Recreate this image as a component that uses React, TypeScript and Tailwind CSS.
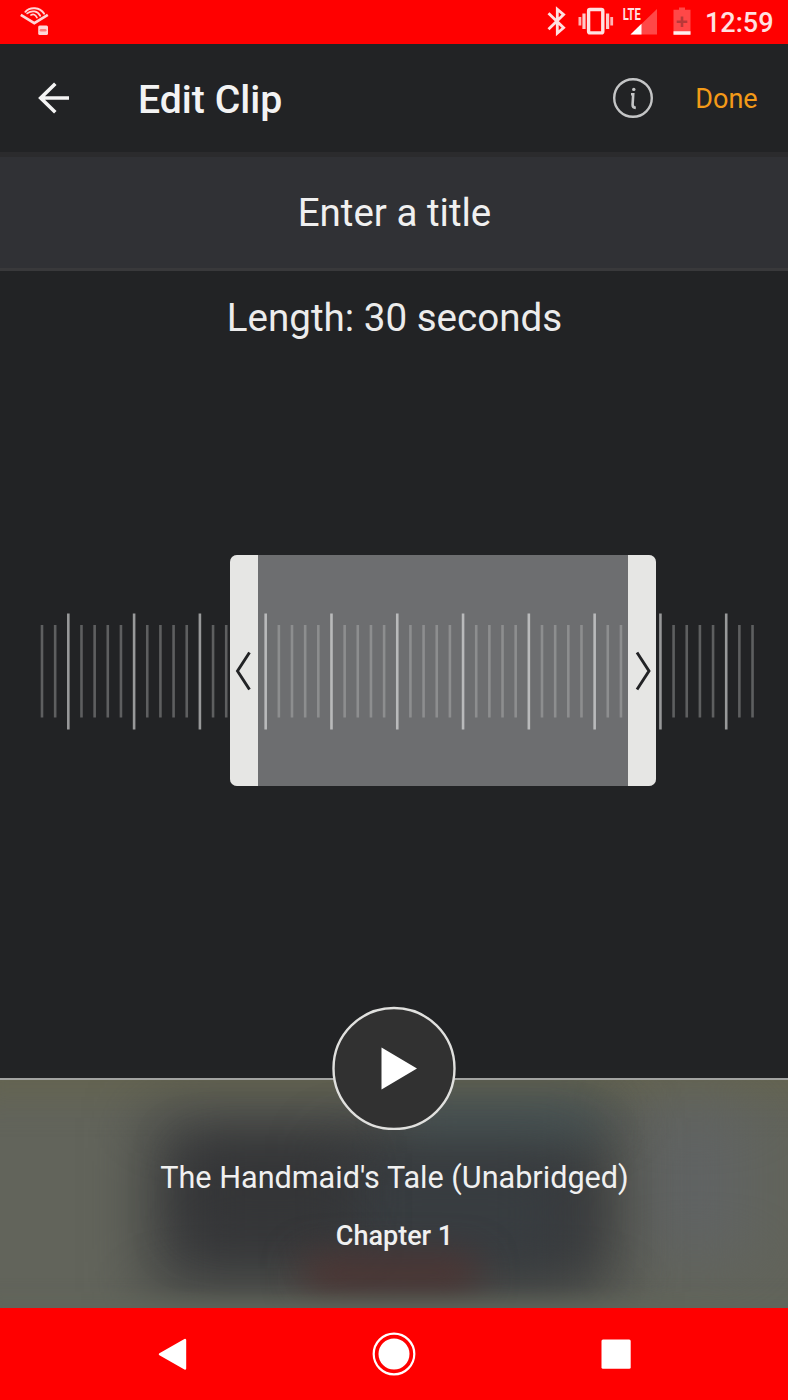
const TICKS = Array.from({ length: 55 }, (_, i) => ({
  x: 42 + i * 13.158,
  major: i % 5 === 2,
}));

function StatusBar() {
  return (
    <div className="flex h-11 shrink-0 items-start justify-between bg-[#ff0000]">
      <svg className="h-11 w-[60px]" viewBox="0 0 60 44" fill="none" stroke="#ffd6d6" strokeLinecap="round">
        <path d="M20.8 14.8 34.3 23.2 47.8 14.8" strokeWidth="2.6" strokeLinecap="butt" />
        <path d="M25.4 11.8C30 6.4 40 7 44 13.6" strokeWidth="2" />
        <path d="M27.2 13.4C32 9.8 37.6 11 40.2 15.8" strokeWidth="1.8" />
        <path d="M31 15C33.6 13.6 35.6 14.8 37 17.6" strokeWidth="1.7" />
        <rect x="38.2" y="25.5" width="9.8" height="9.5" rx="1.5" fill="#ffd6d6" stroke="none" />
        <path d="M41 30.3h4.2" stroke="#ff7c7c" strokeWidth="2.6" />
      </svg>
      <div className="flex h-11 items-start">
        <svg className="h-11 w-[156px]" viewBox="545 0 156 44" fill="none">
          <path d="M548.5 13.2 563.6 27.8 557.3 33.2V9.3L563.6 14.6 548.5 29.3" stroke="#ffe1e1" strokeWidth="2.8" />
          <rect x="588.6" y="9.5" width="14.2" height="23.4" rx="1.4" stroke="#ffe1e1" strokeWidth="3.4" />
          <path d="M584 13.5v15.5M607.6 13.5v15.5" stroke="#ffc9c9" strokeWidth="3.2" />
          <path d="M579.9 17v8.5M611.7 17v8.5" stroke="#ffb4b4" strokeWidth="2.8" />
          <path d="M657 9V34.5H630.5Z" fill="#ff4848" />
          <path d="M641.5 23.8V34.5H630.5Z" fill="#fff" />
          <text x="622.8" y="19.6" textLength="18" lengthAdjust="spacingAndGlyphs" fill="#ffe1e1" className="font-['Roboto'] text-[16px] font-bold">LTE</text>
          <path d="M679 7.5h6v2.2h5.5V34.5h-17V9.7h5.5Z" fill="#ff4848" />
          <path d="M682 16.5v10.5M676.7 21.7h10.6" stroke="#b93838" strokeWidth="2.6" />
          <path d="M673.5 33h17" stroke="#fff0f0" strokeWidth="3.5" />
        </svg>
        <span className="mt-[7px] mr-[15px] ml-1 w-[68px] text-[27px] leading-8 font-medium whitespace-nowrap text-[#ffe1e1]">12:59</span>
      </div>
    </div>
  );
}

function Header() {
  return (
    <header className="flex h-[108px] shrink-0 items-center bg-[#222325]">
      <svg className="ml-[37px] h-9 w-9" viewBox="37 80 36 36" fill="none" stroke="#f4f4f4" strokeWidth="3.6">
        <path d="M69 98H41M55.3 83.8 40.7 98l14.6 14.2" />
      </svg>
      <h1 className="mt-1 ml-[65px] text-[39.2px] leading-[46px] font-medium whitespace-nowrap text-[#f3f3f3]">Edit Clip</h1>
      <svg className="ml-auto h-11 w-11" viewBox="611 76 44 44" fill="none" stroke="#c4c5c6">
        <circle cx="633" cy="98" r="18.8" strokeWidth="2.4" />
        <path d="M631 94.3h2.2l-.6 10.2c-.1 2.2.8 3.2 3.2 3.4" strokeWidth="2.6" />
        <circle cx="633.8" cy="89.4" r="1.7" fill="#c4c5c6" stroke="none" />
      </svg>
      <button className="mt-0.5 mr-[30px] ml-10 w-[63px] text-[27px] leading-8 whitespace-nowrap text-[#f39a18]">Done</button>
    </header>
  );
}

function ClipTimeline() {
  return (
    <div className="relative mt-[215px] h-[231px] w-full">
      <div className="absolute top-0 left-[230px] h-full w-[426px] rounded-[7px] bg-[#6d6e70]" />
      <svg className="absolute inset-0 h-full w-full" viewBox="0 555 788 231">
        {TICKS.map(({ x, major }) => (
          <rect
            key={x}
            x={x - 1.3}
            y={major ? 613.5 : 625}
            width="2.6"
            height={major ? 116 : 92.5}
            fill={
              x > 230 && x < 656
                ? major ? "#b9babb" : "#8d8e8f"
                : major ? "#98999a" : "#5e5f60"
            }
          />
        ))}
      </svg>
      <div className="absolute top-0 left-[230px] flex h-full w-[426px] justify-between">
        <div className="flex w-7 items-center rounded-l-[7px] bg-[#e6e6e4]">
          <svg className="h-11 w-7" viewBox="0 0 28 44" fill="none" stroke="#222325" strokeWidth="2.9">
            <path d="M19.5 3.5 7.5 22l12 18.5" />
          </svg>
        </div>
        <div className="flex w-7 items-center rounded-r-[7px] bg-[#e6e6e4]">
          <svg className="h-11 w-7" viewBox="0 0 28 44" fill="none" stroke="#222325" strokeWidth="2.9">
            <path d="M9 3.5 21 22 9 40.5" />
          </svg>
        </div>
      </div>
    </div>
  );
}

function NowPlaying() {
  return (
    <section className="relative h-[230px] shrink-0 bg-[#62645b]">
      <div className="absolute inset-0 overflow-hidden">
        <div className="absolute top-[-40px] left-[-30px] h-[60px] w-[860px] bg-[#646451] blur-[16px]" />
        <div className="absolute top-[30px] left-[640px] h-[150px] w-[110px] bg-[#606363] blur-[30px]" />
        <div className="absolute top-[40px] left-[152px] h-[174px] w-[462px] bg-[#38393b] blur-[32px]" />
        <div className="absolute top-[24px] left-[400px] h-[40px] w-[200px] bg-[#445558] opacity-80 blur-[24px]" />
        <div className="absolute top-[80px] left-[340px] h-[110px] w-[230px] bg-[#383d41] blur-[34px]" />
        <div className="absolute top-[75px] left-[190px] h-[80px] w-[160px] bg-[#343537] blur-[26px]" />
        <div className="absolute top-[178px] left-[300px] h-[34px] w-[180px] rounded-full bg-[#4e3331] blur-[18px]" />
        <div className="absolute bottom-[-14px] left-[-20px] h-[20px] w-[830px] bg-[#60665b] blur-[10px]" />
      </div>
      <div className="absolute top-0 left-0 h-[2px] w-full bg-[#a3a4a2]" />
      <button aria-label="Play" className="absolute top-[-72px] left-[332px] h-[124px] w-[124px]">
        <svg className="h-full w-full" viewBox="0 0 124 124">
          <circle cx="62" cy="62.5" r="60.5" fill="#313131" stroke="#e0e0de" strokeWidth="2.4" />
          <path d="M49.5 41.5V83.5L85 62.5Z" fill="#fff" />
        </svg>
      </button>
      <div className="relative flex flex-col items-center pt-[81px] pl-px text-[#f0f0f0]">
        <p className="text-[30.6px] leading-[38px] whitespace-nowrap">The Handmaid's Tale (Unabridged)</p>
        <p className="mt-[23px] text-[27px] leading-8 font-medium whitespace-nowrap">Chapter 1</p>
      </div>
    </section>
  );
}

function NavigationBar() {
  return (
    <nav className="h-[92px] shrink-0 bg-[#ff0000]">
      <svg className="h-full w-full" viewBox="0 1308 788 92" fill="#fff">
        <path d="M160 1354.3 185 1340v28.5Z" stroke="#fff" strokeWidth="2.4" strokeLinejoin="round" />
        <circle cx="394" cy="1354" r="20.3" fill="none" stroke="#fff" strokeWidth="2.2" />
        <circle cx="394" cy="1354" r="15.5" />
        <rect x="601.5" y="1339.5" width="29.2" height="29.2" rx="1.5" />
      </svg>
    </nav>
  );
}

export default function App() {
  return (
    <div className="flex h-[1400px] w-[788px] flex-col overflow-hidden bg-[#222325] font-['Roboto',sans-serif]">
      <StatusBar />
      <Header />
      <div className="flex h-[119px] shrink-0 items-center justify-center border-t-[5px] border-b-[3px] border-t-[#2b2b2d] border-b-[#39393b] bg-[#303135]">
        <span className="mt-px pl-px text-[38.5px] leading-[46px] whitespace-nowrap text-[#f0f0f0]">Enter a title</span>
      </div>
      <main className="flex h-[807px] shrink-0 flex-col items-center">
        <p className="mt-6 -mb-px pl-px text-[38.6px] leading-[46px] whitespace-nowrap text-[#ececec]">Length: 30 seconds</p>
        <ClipTimeline />
      </main>
      <NowPlaying />
      <NavigationBar />
    </div>
  );
}
